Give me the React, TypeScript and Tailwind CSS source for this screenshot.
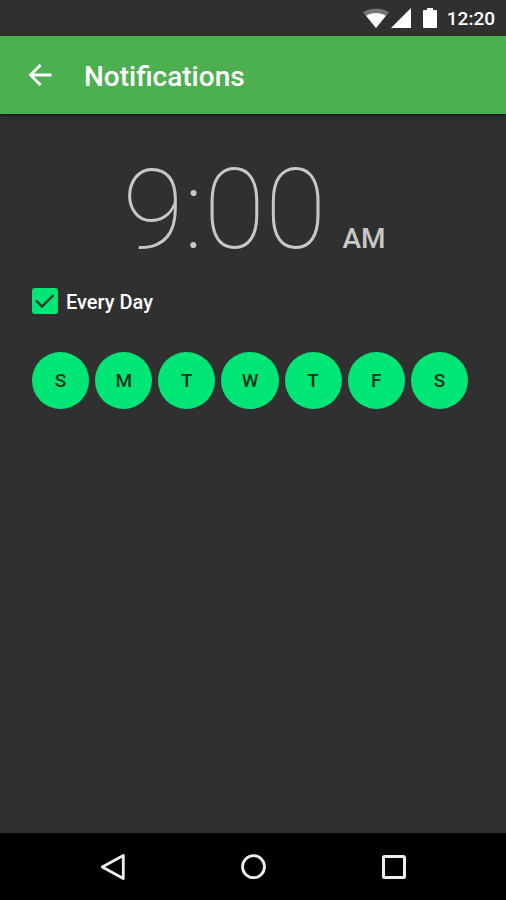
import { useState } from "react";

const dayNames = ["Sunday", "Monday", "Tuesday", "Wednesday", "Thursday", "Friday", "Saturday"];

function StatusBar() {
  return (
    <div className="flex h-9 items-center justify-end bg-[#303030] pr-[11px]">
      <svg className="h-5 w-[26px]" viewBox="0 0 26 20" aria-hidden="true">
        <path d="M0 4.5C7.5 -1 18.5 -1 26 4.5L13 20Z" fill="#757575" />
        <path d="M3.2 7.8C9 4.2 17 4.2 22.8 7.8L13 20Z" fill="#fff" />
      </svg>
      <svg className="ml-[2px] h-5 w-5" viewBox="0 0 20 20" aria-hidden="true">
        <path d="M20 0V20H0Z" fill="#fff" />
      </svg>
      <svg className="ml-3 h-5 w-[14px]" viewBox="0 0 14 20" aria-hidden="true">
        <path d="M4 0H10V2H13Q14 2 14 3V19Q14 20 13 20H1Q0 20 0 19V3Q0 2 1 2H4Z" fill="#fff" />
      </svg>
      <span className="ml-[10px] pt-[2px] text-[19px] leading-6 font-medium">12:20</span>
    </div>
  );
}

function NavBar() {
  return (
    <nav className="flex h-[67px] items-center justify-center gap-28 bg-black">
      <button aria-label="Back">
        <svg className="h-7 w-7" viewBox="0 0 28 28" fill="none" stroke="#eee" strokeWidth="2.8" strokeLinejoin="round">
          <path d="M24.3 2.5V25.5L3.3 14Z" />
        </svg>
      </button>
      <button aria-label="Home">
        <svg className="h-7 w-7" viewBox="0 0 28 28" fill="none" stroke="#eee" strokeWidth="2.8">
          <circle cx="14.5" cy="13.7" r="11" />
        </svg>
      </button>
      <button aria-label="Recent apps">
        <svg className="h-7 w-7" viewBox="0 0 28 28" fill="none" stroke="#eee" strokeWidth="3">
          <rect x="4.5" y="3.5" width="21" height="21" rx="1" />
        </svg>
      </button>
    </nav>
  );
}

export default function App() {
  const [days, setDays] = useState<boolean[]>(Array(7).fill(true));
  const all = days.every(Boolean);
  return (
    <div className="flex min-h-screen flex-col bg-[#303030] font-['Roboto',sans-serif] text-white">
      <StatusBar />
      <header className="flex h-[78px] items-center bg-[#4caf50] pl-7 shadow-[0_1px_3px_rgba(0,0,0,0.7)]">
        <button aria-label="Back" className="flex h-6 w-6 items-center">
          <svg className="h-6 w-6" viewBox="0 0 24 24" fill="none" stroke="#fff" strokeWidth="2.8">
            <path d="M23.5 12H3M12.5 2L2.5 12L12.5 22" />
          </svg>
        </button>
        <h1 className="ml-8 pt-1 text-[28px] leading-9 font-medium">Notifications</h1>
      </header>
      <main className="flex-1 pr-[38px] pl-8">
        <button className="mx-auto flex items-baseline pt-9 pl-2 text-[#c8c8c8]">
          <span className="text-[112px] leading-[120px] font-thin">9:00</span>
          <span className="ml-4 text-[28px] leading-9 font-medium">AM</span>
        </button>
        <div className="mt-4 flex items-center gap-2">
          <span className="grid h-[26px] w-[26px]">
            <input
              id="every-day"
              type="checkbox"
              checked={all}
              onChange={() => setDays(Array(7).fill(!all))}
              className="peer col-start-1 row-start-1 appearance-none rounded-[3px] border-2 border-[#00e676] checked:bg-[#00e676]"
            />
            <svg
              className="pointer-events-none invisible col-start-1 row-start-1 peer-checked:visible"
              viewBox="0 0 26 26"
              fill="none"
              stroke="#1c3a28"
              strokeWidth="2.4"
              aria-hidden="true"
            >
              <path d="M4 12.5L10 18.5L21.5 7" />
            </svg>
          </span>
          <label htmlFor="every-day" className="pt-[2px] text-xl font-medium">
            Every Day
          </label>
        </div>
        <div className="mt-9 flex gap-[6px]">
          {dayNames.map((day, i) => (
            <button
              key={day}
              aria-label={day}
              aria-pressed={days[i]}
              onClick={() => setDays(days.map((on, n) => (n === i ? !on : on)))}
              className="aspect-square flex-1 rounded-full bg-[#424242] pt-[2px] text-[19px] font-medium text-white aria-pressed:bg-[#00e676] aria-pressed:text-[#08331b]"
            >
              {day[0]}
            </button>
          ))}
        </div>
      </main>
      <NavBar />
    </div>
  );
}
